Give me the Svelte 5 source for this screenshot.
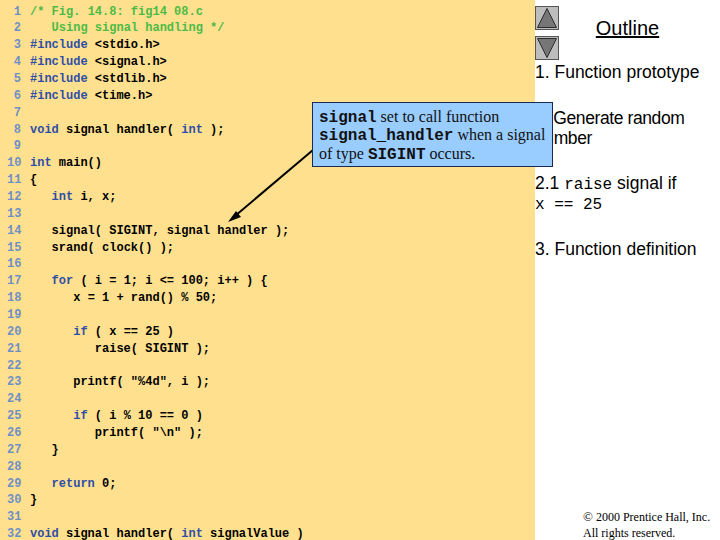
<script>
  const keywords = /^(void|int|for|if|return|#include)$/;

  const source = [
    '/* Fig. 14.8: fig14 08.c',
    '   Using signal handling */',
    '#include <stdio.h>',
    '#include <signal.h>',
    '#include <stdlib.h>',
    '#include <time.h>',
    '',
    'void signal handler( int );',
    '',
    'int main()',
    '{',
    '   int i, x;',
    '',
    '   signal( SIGINT, signal handler );',
    '   srand( clock() );',
    '',
    '   for ( i = 1; i <= 100; i++ ) {',
    '      x = 1 + rand() % 50;',
    '',
    '      if ( x == 25 )',
    '         raise( SIGINT );',
    '',
    '      printf( "%4d", i );',
    '',
    '      if ( i % 10 == 0 )',
    '         printf( "\\n" );',
    '   }',
    '',
    '   return 0;',
    '}',
    '',
    'void signal handler( int signalValue )'
  ];

  // split on whitespace but keep it, so indents survive
  function tokens(line) {
    return line.split(/(\s+)/).map((text) => ({ text, kw: keywords.test(text) }));
  }
</script>

<div class="slide">
  <div class="code">
    {#each source as line, i}
      <div class="num">{i + 1}</div>
      <div class="line" class:comment={i < 2}>
        {#each tokens(line) as t}<span class:kw={t.kw}>{t.text}</span>{/each}
      </div>
    {/each}
  </div>

  <div class="side">
    <div class="head">
      <div class="nav">
        <div class="btn">
          <svg width="22" height="22" viewBox="0 0 22 22"><path d="M11 1.5 L20.5 20.5 H1.5 Z" fill="#767676" stroke="#2c2c2c" stroke-width="1" /></svg>
        </div>
        <div class="btn">
          <svg width="22" height="22" viewBox="0 0 22 22"><path d="M1.5 1.5 H20.5 L11 20.5 Z" fill="#767676" stroke="#2c2c2c" stroke-width="1" /></svg>
        </div>
      </div>
      <div class="title">Outline</div>
    </div>

    <div class="items">
      <div class="item">1. Function prototype</div>
      <div class="item second">2. Generate random<br />number</div>
      <div class="item third">2.1 <span class="mono">raise</span> signal if<br /><span class="mono">x == 25</span></div>
      <div class="item fourth">3. Function definition</div>
    </div>

    <div class="copy">
      <div><span class="c">©</span> 2000 Prentice Hall, Inc.</div>
      <div>All rights reserved.</div>
    </div>
  </div>

  <svg class="arrow" width="720" height="540" viewBox="0 0 720 540">
    <line x1="313" y1="150" x2="235" y2="216" stroke="#000" stroke-width="2" />
    <path d="M228 222 L236 211 L241 217 Z" fill="#000" />
  </svg>

  <div class="callout">
    <div><b>signal</b> set to call function</div>
    <div><b>signal_handler</b> when a signal</div>
    <div>of type <b>SIGINT</b> occurs.</div>
  </div>
</div>

<style>
  :global(body) {
    margin: 0;
    background: #fff;
  }

  .slide {
    position: relative;
    width: 720px;
    height: 540px;
    overflow: hidden;
    display: flex;
    background: #fff;
  }

  .code {
    width: 535px;
    height: 540px;
    box-sizing: border-box;
    padding: 3.5px 0 0 7px;
    background: #ffe08f;
    display: grid;
    grid-template-columns: 14px 1fr;
    column-gap: 9px;
    grid-auto-rows: 16.87px;
    font: bold 12px/16.87px "Liberation Mono", monospace;
    color: #000;
  }

  .num {
    color: #7090c4;
    text-align: right;
  }

  .line {
    white-space: pre;
    height: 16.87px;
  }

  .kw {
    color: #2f4fa6;
  }

  .comment {
    color: #4cbb45;
  }

  .side {
    flex: 1;
    position: relative;
    font-family: "Liberation Sans", Arial, sans-serif;
    color: #000;
  }

  .head {
    display: flex;
    padding-top: 6px;
  }

  .nav {
    display: flex;
    flex-direction: column;
    gap: 6px;
  }

  .btn {
    width: 24px;
    height: 24px;
    box-sizing: border-box;
    background: #bdbdbd;
    border: 1px solid #555;
    display: flex;
    align-items: center;
    justify-content: center;
  }

  .title {
    flex: 1;
    text-align: center;
    font-size: 20px;
    line-height: 22px;
    margin: 11px 0 0 -24px;
    text-decoration: underline;
  }

  .items {
    font-size: 17.5px;
    line-height: 19.5px;
    padding-top: 3px;
  }

  .item {
    white-space: nowrap;
  }

  .second {
    margin-top: 26.5px;
    letter-spacing: -0.4px;
  }

  .third {
    margin-top: 26px;
  }

  .fourth {
    margin-top: 27px;
  }

  .mono {
    font-family: "Liberation Mono", monospace;
    font-size: 16px;
    line-height: 1;
  }

  .copy {
    position: absolute;
    left: 48px;
    top: 509px;
    font: 12px/15.5px "Liberation Serif", serif;
    white-space: nowrap;
  }

  .c {
    font-size: 13px;
  }

  .arrow {
    position: absolute;
    left: 0;
    top: 0;
    pointer-events: none;
  }

  .callout {
    position: absolute;
    left: 312px;
    top: 102px;
    width: 241px;
    height: 65px;
    box-sizing: border-box;
    padding: 4.5px 0 0 6px;
    background: #99ccff;
    border: 1px solid #1a2a55;
    font: 16px/18.5px "Liberation Serif", serif;
    white-space: nowrap;
    color: #111;
  }

  .callout b {
    font-family: "Liberation Mono", monospace;
    font-size: 16px;
    line-height: 1;
  }
</style>
